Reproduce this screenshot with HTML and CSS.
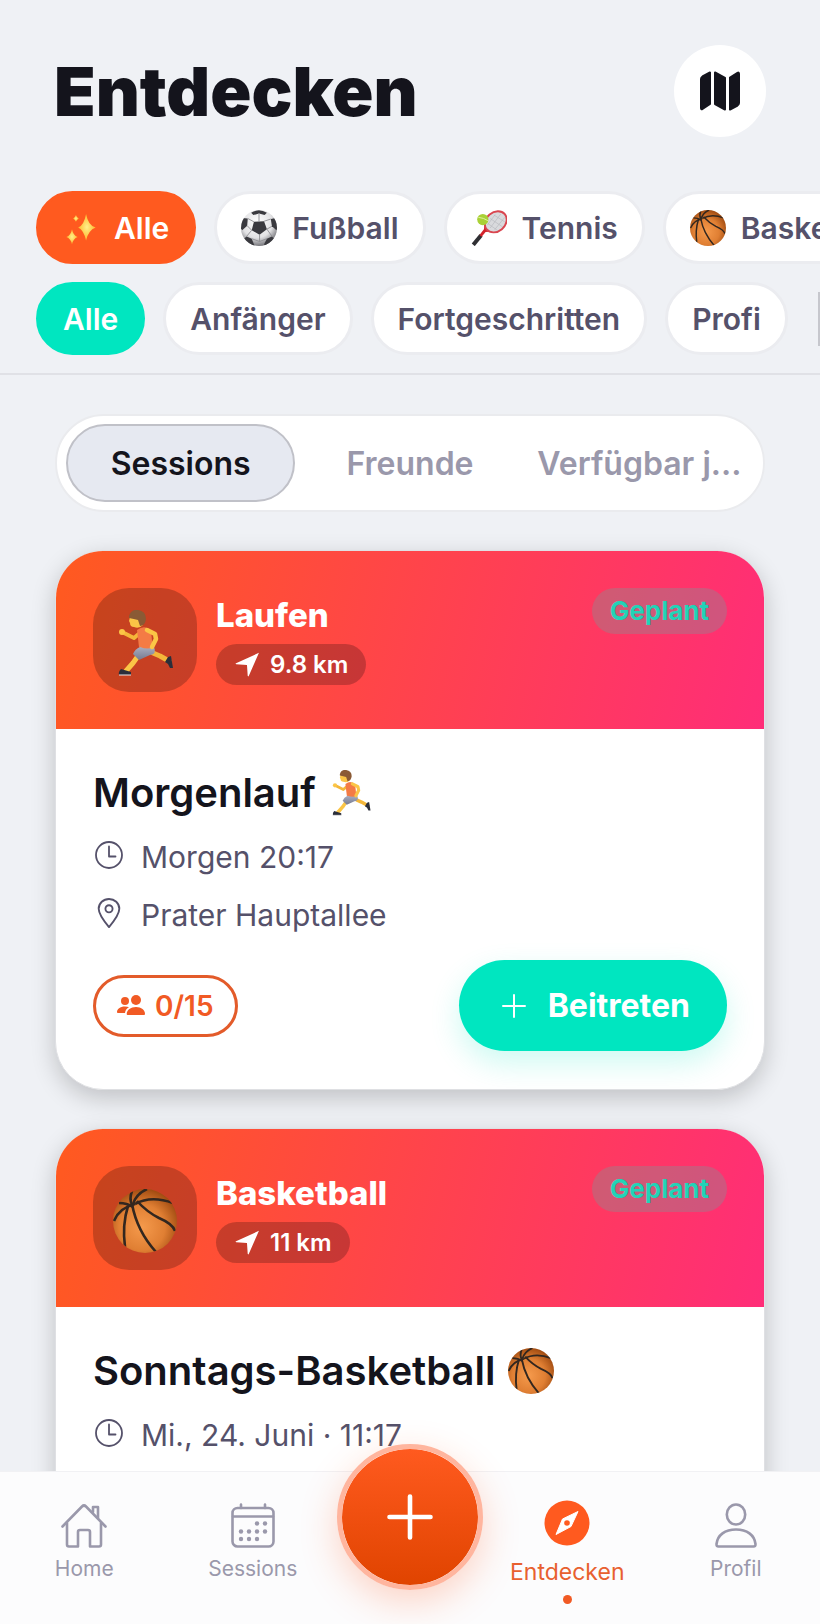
FILE: index.html
```html
<!DOCTYPE html>
<html lang="de">
<head>
    <meta charset="UTF-8">
    <meta name="viewport" content="width=device-width, initial-scale=1.0">
    <title>Entdecken</title>
    <link rel="stylesheet" href="styles.css">
</head>
<body>

<!-- Icon-Vorlagen -->
<svg class="sprite" aria-hidden="true">
    <defs>
        <radialGradient id="gBall" cx="45%" cy="60%" r="60%">
            <stop offset="0" stop-color="#f59a4c"/>
            <stop offset="0.6" stop-color="#e07f33"/>
            <stop offset="1" stop-color="#a34d12"/>
        </radialGradient>
        <radialGradient id="gSoccer" cx="45%" cy="35%" r="65%">
            <stop offset="0" stop-color="#ffffff"/>
            <stop offset="0.65" stop-color="#e2e2e4"/>
            <stop offset="1" stop-color="#77777c"/>
        </radialGradient>
        <radialGradient id="gStar">
            <stop offset="0" stop-color="#fff08a"/>
            <stop offset="1" stop-color="#fdb92c"/>
        </radialGradient>
        <linearGradient id="gShorts" x1="0" y1="0" x2="0" y2="1">
            <stop offset="0" stop-color="#a9adc0"/>
            <stop offset="1" stop-color="#757a90"/>
        </linearGradient>
        <clipPath id="ballClip"><circle cx="32" cy="32" r="32"/></clipPath>
    </defs>

    <symbol id="basketball" viewBox="0 0 64 64">
        <circle cx="32" cy="32" r="32" fill="url(#gBall)"/>
        <g fill="none" stroke="#33271f" stroke-width="2.6" clip-path="url(#ballClip)">
            <path d="M19 16Q16 10 19 2"/>
            <path d="M20 15Q23 5 34 0"/>
            <path d="M22 15Q38 6 60 14"/>
            <path d="M24 12Q34 23 46 29Q60 35 62 42"/>
            <path d="M19 15Q24 42 43 63"/>
            <path d="M15 17Q9 36 12 58"/>
            <path d="M22 15Q6 19 1 32"/>
            <path d="M6 14Q14 14 20 18"/>
        </g>
    </symbol>

    <symbol id="soccer" viewBox="0 0 64 64">
        <circle cx="32" cy="32" r="32" fill="url(#gSoccer)"/>
        <g fill="#3a3a3f" clip-path="url(#ballClip)">
            <path d="M23 21l18-1 5 14-13 10-14-8z"/>
            <path d="M18 5Q32-4 46 5L42 9 32 6 22 9z"/>
            <path d="M2 14l10 1-1 13-9 8-6-10z"/>
            <path d="M62 14l-9 2 2 13 8 7 5-10z"/>
            <path d="M10 47l9 4 4 10-3 5-16-14z"/>
            <path d="M55 47l-9 4-5 10 3 5 16-14z"/>
        </g>
        <g fill="none" stroke="#8d8d92" stroke-width="1.6">
            <path d="M23 21l-11-6M41 20l12-4M46 34l9-5M19 36l-8-8M33 44v12M33 56l-14-5M33 56l13-5M32 6v14M9 48l10-12M56 48l-10-14"/>
        </g>
    </symbol>

    <symbol id="tennis" viewBox="0 0 64 64">
        <path d="M4 62L18 45" stroke="#2f2f33" stroke-width="7"/>
        <path d="M17 46l8-10" stroke="#d3222a" stroke-width="5"/>
        <path d="M25 37Q25 28 27 22M25 37Q33 37 41 36" stroke="#d3222a" stroke-width="4" fill="none"/>
        <ellipse cx="44" cy="21" rx="21" ry="17" transform="rotate(-40 44 21)" fill="#d9dadd" stroke="#d94650" stroke-width="3.5"/>
        <path d="M30 24l18 13M34 15l22 15M41 9l19 12M34 32L53 7M42 35l18-22M29 27L43 8" stroke="#b2b4b9" stroke-width="1"/>
        <circle cx="21" cy="17" r="10" fill="#a9d136"/>
        <path d="M13 13Q23 14 30 19" stroke="#e4f3b0" stroke-width="1.6" fill="none"/>
    </symbol>

    <symbol id="sparkles" viewBox="0 0 64 64">
        <g fill="url(#gStar)">
            <path d="M41 7Q45 28 58 31Q45 36 41 54Q37 36 27 31Q37 28 41 7z"/>
            <path d="M16 34Q18 45 26 48Q18 51 16 61Q14 51 6 48Q14 45 16 34z"/>
            <path d="M23 9Q24 13 28 15Q24 17 23 21Q22 17 18 15Q22 13 23 9z"/>
        </g>
    </symbol>

    <symbol id="runner" viewBox="0 0 64 66">
        <g fill="none" stroke-linecap="round" stroke-linejoin="round">
            <path d="M40 43L47 46 56 51" stroke="#f4b73a" stroke-width="5"/>
            <path d="M25 46L20 53 13 61" stroke="#fbc546" stroke-width="5"/>
            <path d="M28 22L21 28 11 23" stroke="#f4b73a" stroke-width="4"/>
        </g>
        <circle cx="9" cy="22" r="3" fill="#fbc546"/>
        <path d="M24 20Q32 14 38 21L40 40Q33 42 26 37z" fill="#f47b45"/>
        <path d="M27 37Q35 40 41 37Q44 44 37 45L26 50 20 44Q22 39 27 37z" fill="url(#gShorts)"/>
        <path d="M34 20L42 24 43 29 39 37" fill="none" stroke="#fbc546" stroke-width="4.500" stroke-linecap="round" stroke-linejoin="round"/>
        <path d="M17 7h13v8q-4 4-9 2q-4 0-4-4l-1-2z" fill="#fbc546"/>
        <path d="M16 6Q18-1 25 0Q33 1 33 9Q32 16 27 16L25 10Q21 9 16 8z" fill="#8a5a35"/>
        <path d="M55 47l3-1 2 12-3 0-2-4-3-2z" fill="#2b2e3a"/>
        <path d="M8 59l10 3v3H6q-1-3 2-6z" fill="#2b2e3a"/>
        <path d="M6 65h12" stroke="#e8e8ea" stroke-width="1"/>
    </symbol>

    <symbol id="arrow" viewBox="0 0 24 24">
        <path d="M23 .8L13.200 23Q12.600 24 12.200 22.800L11.500 12.500 1.200 11.800Q0 11.400 1 10.800z" fill="currentColor"/>
    </symbol>

    <symbol id="clock" viewBox="0 0 28 28">
        <g fill="none" stroke="currentColor" stroke-width="1.800" stroke-linecap="round" stroke-linejoin="round">
            <circle cx="14" cy="14" r="13"/>
            <path d="M14 5.500v10h6.500"/>
        </g>
    </symbol>

    <symbol id="pin" viewBox="0 0 28 32">
        <g fill="none" stroke="currentColor" stroke-width="2" stroke-linejoin="round">
            <path d="M14 31Q3 18 3 11.500C3 5.500 8 1 14 1S25 5.500 25 11.500Q25 18 14 31z"/>
            <circle cx="14" cy="11.500" r="3.800"/>
        </g>
    </symbol>

    <symbol id="people" viewBox="0 0 28 22">
        <g fill="currentColor">
            <circle cx="19" cy="5" r="5"/>
            <path d="M10.500 20q-.8 0-.8-1c0-4 4-7 9.300-7s9 3 9 7q0 1-1 1z"/>
            <circle cx="8" cy="6" r="4"/>
            <path d="M8 18H.8Q0 18 0 17c0-3 3-5.500 8-5.500q2.500 0 4 .8Q8.500 14 8 18z"/>
        </g>
    </symbol>
</svg>

<div class="app">
    <header class="header">
        <h1>Entdecken</h1>
        <button class="map-btn" aria-label="Karte">
            <svg viewBox="0 0 42 40" fill="#14141c" stroke="#14141c" stroke-width="2" stroke-linejoin="round">
                <path d="M2 8Q2 6.500 3.500 5.500L11 1.500V33L3.500 38Q2 39 2 37z"/>
                <path d="M16 1.500L26 7V38.500L16 33z"/>
                <path d="M31 6.500L38.500 1.800Q40 1 40 3V32Q40 33.500 38.500 34.500L31 38.500z"/>
            </svg>
        </button>
    </header>

    <div class="filters">
        <div class="filter-row">
            <button class="chip chip-sport active"><svg><use href="#sparkles"/></svg>Alle</button>
            <button class="chip chip-sport"><svg><use href="#soccer"/></svg>Fußball</button>
            <button class="chip chip-sport"><svg><use href="#tennis"/></svg>Tennis</button>
            <button class="chip chip-sport"><svg><use href="#basketball"/></svg>Basketball</button>
        </div>
        <div class="filter-row">
            <button class="chip chip-level active">Alle</button>
            <button class="chip">Anfänger</button>
            <button class="chip">Fortgeschritten</button>
            <button class="chip">Profi</button>
            <span class="divider"></span>
        </div>
    </div>

    <main class="feed">
        <div class="tabs">
            <button class="tab active">Sessions</button>
            <button class="tab">Freunde</button>
            <button class="tab">Verfügbar j...</button>
        </div>

        <article class="card">
            <div class="card-header">
                <div class="sport-icon"><svg><use href="#runner"/></svg></div>
                <div class="sport-info">
                    <h3>Laufen</h3>
                    <span class="distance"><svg><use href="#arrow"/></svg>9.8 km</span>
                </div>
                <span class="status">Geplant</span>
            </div>
            <div class="card-body">
                <h2>Morgenlauf <svg><use href="#runner"/></svg></h2>
                <p class="meta"><svg><use href="#clock"/></svg>Morgen 20:17</p>
                <p class="meta"><svg><use href="#pin"/></svg>Prater Hauptallee</p>
                <div class="card-footer">
                    <span class="count"><svg><use href="#people"/></svg>0/15</span>
                    <button class="join-btn">
                        <svg viewBox="0 0 24 24" stroke="#fff" stroke-width="2" stroke-linecap="round"><path d="M12 1v22M1 12h22"/></svg>
                        Beitreten
                    </button>
                </div>
            </div>
        </article>

        <article class="card">
            <div class="card-header">
                <div class="sport-icon"><svg><use href="#basketball"/></svg></div>
                <div class="sport-info">
                    <h3>Basketball</h3>
                    <span class="distance"><svg><use href="#arrow"/></svg>11 km</span>
                </div>
                <span class="status">Geplant</span>
            </div>
            <div class="card-body">
                <h2>Sonntags-Basketball <svg><use href="#basketball"/></svg></h2>
                <p class="meta"><svg><use href="#clock"/></svg>Mi., 24. Juni · 11:17</p>
            </div>
        </article>
    </main>

    <nav class="bottom-nav">
        <a class="nav-item" href="#home">
            <svg viewBox="0 0 46 46" fill="none" stroke="currentColor" stroke-width="2.600" stroke-linecap="round" stroke-linejoin="round">
                <path d="M1.500 23.500L21 3.500Q23 1.500 25 3.500L44.500 23.500"/>
                <path d="M6 20V41.500Q6 43.500 8 43.500H17V29Q17 27 19 27H27Q29 27 29 29V43.500H38Q40 43.500 40 41.500V20"/>
                <path d="M32 9V4H37V15"/>
            </svg>
            Home
        </a>
        <a class="nav-item" href="#sessions">
            <svg viewBox="0 0 46 46" fill="none" stroke="currentColor" stroke-width="2.600" stroke-linecap="round">
                <rect x="2.500" y="5" width="41" height="38.500" rx="5"/>
                <path d="M3 13.500H43M11 1.500V5M35 1.500V5"/>
                <g fill="currentColor" stroke="none">
                    <circle cx="27" cy="20.500" r="2.200"/><circle cx="35" cy="20.500" r="2.200"/>
                    <circle cx="11" cy="28.500" r="2.200"/><circle cx="19" cy="28.500" r="2.200"/><circle cx="27" cy="28.500" r="2.200"/><circle cx="35" cy="28.500" r="2.200"/>
                    <circle cx="11" cy="36" r="2.200"/><circle cx="19" cy="36" r="2.200"/><circle cx="27" cy="36" r="2.200"/>
                </g>
            </svg>
            Sessions
        </a>
        <button class="fab" aria-label="Neue Session">
            <svg viewBox="0 0 46 46" stroke="#fff" stroke-width="4.600" stroke-linecap="round"><path d="M23 2.500v41M2.500 23h41"/></svg>
        </button>
        <a class="nav-item active" href="#entdecken">
            <svg viewBox="0 0 46 46">
                <circle cx="23" cy="23" r="22.500" fill="#ff5a1f"/>
                <path d="M34 11.500L27 26.500 12 34.500 18.500 19z" fill="#fff" stroke="#fff" stroke-width="1" stroke-linejoin="round"/>
                <circle cx="23" cy="23" r="2.800" fill="#ff5a1f"/>
            </svg>
            Entdecken
            <span class="dot"></span>
        </a>
        <a class="nav-item" href="#profil">
            <svg viewBox="0 0 46 46" fill="none" stroke="currentColor" stroke-width="2.600" stroke-linejoin="round">
                <ellipse cx="23" cy="11.500" rx="9.200" ry="10"/>
                <path d="M3.500 41C4.500 32 12 26.500 23 26.500S41.500 32 42.500 41Q42.700 43.500 40.500 43.500H5.500Q3.300 43.500 3.500 41z"/>
            </svg>
            Profil
        </a>
    </nav>
</div>

</body>
</html>
```
FILE: styles.css
```css
* {
    box-sizing: border-box;
}
body {
    font-family: Inter, "Liberation Sans", sans-serif;
    margin: 0;
    background-color: #eff1f5;
    color: #14141c;
}
h1, h2, h3, p {
    margin: 0;
}
button {
    font-family: inherit;
    border: none;
    cursor: pointer;
    padding: 0;
}
svg {
    flex-shrink: 0;
}
.sprite {
    position: absolute;
    width: 0;
    height: 0;
}
.app {
    height: 100vh;
    display: flex;
    flex-direction: column;
    overflow: hidden;
}

/* Kopfzeile */
.header {
    display: flex;
    justify-content: space-between;
    align-items: center;
    padding: 45px 54px 54px;
}
.header h1 {
    font-size: 68px;
    line-height: 72px;
    font-weight: 900;
}
.map-btn {
    width: 92px;
    height: 92px;
    border-radius: 50%;
    background: #ffffff;
    display: flex;
    align-items: center;
    justify-content: center;
}
.map-btn svg {
    width: 42px;
    height: 40px;
}

/* Filter */
.filters {
    display: flex;
    flex-direction: column;
    gap: 18px;
    padding: 0 0 18px 36px;
    border-bottom: 2px solid #e0e1e6;
}
.filter-row {
    display: flex;
    align-items: center;
    gap: 18px;
    overflow-x: auto;
    scrollbar-width: none;
}
.chip {
    flex-shrink: 0;
    display: flex;
    align-items: center;
    gap: 15px;
    height: 73px;
    padding: 0 24px;
    border: 3px solid #ebecf0;
    border-radius: 37px;
    background: #ffffff;
    color: #55516a;
    font-size: 30px;
    font-weight: 600;
}
.chip svg {
    width: 36px;
    height: 36px;
}
.chip-sport.active {
    background: #ff5a1f;
    border-color: #ff5a1f;
    color: #ffffff;
}
.chip-level.active {
    background: #00e6c0;
    border-color: #00e6c0;
    color: #ffffff;
}
.divider {
    flex-shrink: 0;
    width: 2px;
    height: 54px;
    margin-left: 12px;
    background: #c6c7cd;
}

/* Tabs */
.feed {
    flex: 1;
    min-height: 0;
    overflow-y: auto;
    scrollbar-width: none;
    display: flex;
    flex-direction: column;
    gap: 38px;
    padding: 39px 55px;
}
.tabs {
    flex-shrink: 0;
    display: grid;
    grid-template-columns: repeat(3, 1fr);
    height: 98px;
    padding: 8px 9px;
    border: 2px solid #eaebee;
    border-radius: 49px;
    background: #ffffff;
}
.tab {
    border: 2px solid transparent;
    border-radius: 40px;
    background: none;
    color: #9a98ab;
    font-size: 32px;
    font-weight: 600;
    white-space: nowrap;
}
.tab.active {
    background: #e6e9f1;
    border-color: #c0c1c8;
    color: #14141c;
}

/* Karten */
.card {
    flex-shrink: 0;
    min-height: 540px;
    border: 1px solid #dfe0e3;
    border-radius: 48px;
    background: #ffffff;
    box-shadow: 0 8px 24px rgba(0, 0, 0, 0.2);
    overflow: hidden;
}
.card-header {
    display: flex;
    align-items: flex-start;
    gap: 19px;
    height: 178px;
    padding: 37px;
    background: linear-gradient(104deg, #ff5a1f 0%, #ff2d78 100%);
}
.sport-icon {
    width: 104px;
    height: 104px;
    border-radius: 36px;
    background: rgba(0, 0, 0, 0.22);
    display: flex;
    align-items: center;
    justify-content: center;
}
.sport-icon svg {
    width: 64px;
    height: 66px;
    margin-top: 6px;
}
.sport-info {
    flex: 1;
    padding-top: 8px;
    color: #ffffff;
}
.sport-info h3 {
    font-size: 33px;
    line-height: 38px;
    font-weight: 800;
    margin-bottom: 10px;
}
.distance {
    display: inline-flex;
    align-items: center;
    gap: 10px;
    height: 41px;
    padding: 0 18px 0 19px;
    border-radius: 21px;
    background: rgba(0, 0, 0, 0.22);
    font-size: 24px;
    font-weight: 600;
}
.distance svg {
    width: 25px;
    height: 25px;
}
.status {
    height: 46px;
    line-height: 46px;
    padding: 0 18px;
    border-radius: 23px;
    background: rgba(100, 170, 160, 0.3);
    color: #22d3b7;
    font-size: 26px;
    font-weight: 700;
}
.card-body {
    padding: 40px 37px 37px;
}
.card-body h2 {
    display: flex;
    align-items: center;
    gap: 12px;
    font-size: 40px;
    line-height: 48px;
    font-weight: 600;
    margin-bottom: 11px;
}
.card-body h2 svg {
    width: 46px;
    height: 46px;
}
.meta {
    display: flex;
    align-items: center;
    gap: 16px;
    height: 58px;
    color: #55516a;
    font-size: 30px;
}
.meta svg {
    width: 32px;
    height: 34px;
    padding: 0 2px 4px;
}
.card-footer {
    display: flex;
    justify-content: space-between;
    align-items: center;
    margin-top: 16px;
}
.count {
    display: flex;
    align-items: center;
    gap: 10px;
    height: 62px;
    padding: 0 21px;
    border: 3px solid #e35b2a;
    border-radius: 31px;
    color: #f15a24;
    font-size: 28px;
    font-weight: 600;
}
.count svg {
    width: 28px;
    height: 22px;
}
.join-btn {
    display: flex;
    align-items: center;
    gap: 22px;
    height: 91px;
    padding: 0 37px 0 43px;
    border-radius: 46px;
    background: #00e6c0;
    box-shadow: 0 12px 30px rgba(0, 230, 192, 0.2);
    color: #ffffff;
    font-size: 32px;
    font-weight: 700;
}
.join-btn svg {
    width: 24px;
    height: 24px;
}

/* Navigation unten */
.bottom-nav {
    position: relative;
    z-index: 1;
    display: grid;
    grid-template-columns: 1fr 1fr 146px 1fr 1fr;
    height: 153px;
    background: #fcfcfd;
    border-top: 1px solid #f1f1f4;
}
.nav-item {
    display: flex;
    flex-direction: column;
    align-items: center;
    padding-top: 31px;
    color: #9a98ab;
    font-size: 21px;
    line-height: 28px;
    text-decoration: none;
}
.nav-item svg {
    width: 46px;
    height: 46px;
    margin-bottom: 6px;
}
.nav-item.active {
    padding-top: 28px;
    color: #e8602f;
    font-size: 23px;
}
.nav-item.active svg {
    margin-bottom: 12px;
}
.dot {
    width: 9px;
    height: 9px;
    margin-top: 9px;
    border-radius: 50%;
    background: #f15a24;
}
.fab {
    width: 146px;
    height: 146px;
    margin-top: -28px;
    border: 5px solid #ffb59e;
    border-radius: 50%;
    background: linear-gradient(#ff5a1f, #e04400) padding-box;
    box-shadow: 0 12px 36px rgba(255, 90, 31, 0.25);
    display: flex;
    align-items: center;
    justify-content: center;
}
.fab svg {
    width: 46px;
    height: 46px;
}
```
